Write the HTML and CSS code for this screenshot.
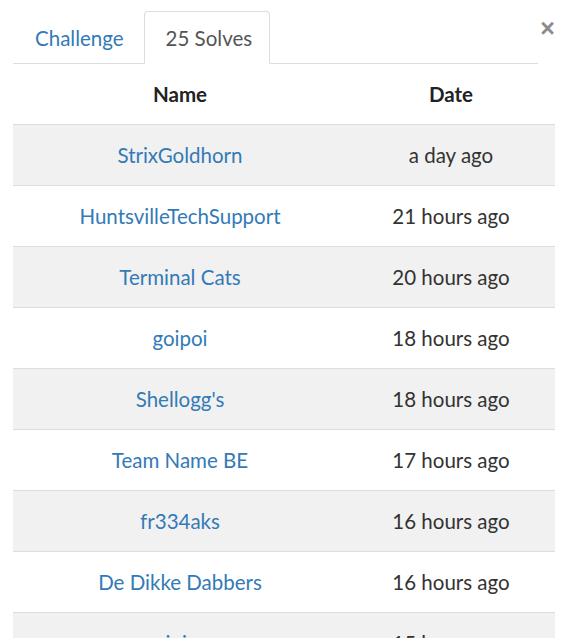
FILE: index.html
```html
<!DOCTYPE html>
<html>
<head>
<meta charset="utf-8">
<link rel="stylesheet" href="styles.css">
</head>
<body>
<div class="modal">
  <div class="head">
    <ul class="tabs">
      <li class="tab"><a href="#">Challenge</a></li>
      <li class="tab active"><a href="#">25 Solves</a></li>
    </ul>
    <button class="close">&times;</button>
  </div>
  <table class="solves">
    <thead>
      <tr><th class="c-name">Name</th><th class="c-date">Date</th></tr>
    </thead>
    <tbody>
      <tr><td><a href="#">StrixGoldhorn</a></td><td>a day ago</td></tr>
      <tr><td><a href="#">HuntsvilleTechSupport</a></td><td>21 hours ago</td></tr>
      <tr><td><a href="#">Terminal Cats</a></td><td>20 hours ago</td></tr>
      <tr><td><a href="#">goipoi</a></td><td>18 hours ago</td></tr>
      <tr><td><a href="#">Shellogg's</a></td><td>18 hours ago</td></tr>
      <tr><td><a href="#">Team Name BE</a></td><td>17 hours ago</td></tr>
      <tr><td><a href="#">fr334aks</a></td><td>16 hours ago</td></tr>
      <tr><td><a href="#">De Dikke Dabbers</a></td><td>16 hours ago</td></tr>
      <tr><td><a href="#">ninjas</a></td><td>15 hours ago</td></tr>
    </tbody>
  </table>
</div>
</body>
</html>
```
FILE: styles.css
```css
html, body {
  margin: 0;
  padding: 0;
  background: #fff;
  overflow: hidden;
}
body {
  font-family: Lato, "Open Sans", sans-serif;
  font-size: 20.5px;
  color: #333;
  line-height: 1.42857;
}
.modal {
  padding: 11px 9px 0 13px;
}
.head {
  display: flex;
  align-items: flex-start;
}
.tabs {
  list-style: none;
  margin: 0;
  padding: 0;
  display: flex;
  flex: 1;
  border-bottom: 1px solid #ddd;
}
.tab {
  margin-right: 0;
  margin-bottom: -1px;
}
.tab a {
  display: block;
  padding: 12px 19px 11px 21px;
  line-height: 28px;
  border: 1px solid transparent;
  border-radius: 4px 4px 0 0;
  color: #337ab7;
  text-decoration: none;
}
.tab.active a {
  color: #555;
  background: #fff;
  padding-right: 17px;
  border-color: #ddd #ddd transparent #ddd;
}
.close {
  margin: 5px 0 0 2px;
  padding: 0;
  width: 15px;
  background: none;
  border: 0;
  font-family: "Liberation Sans", sans-serif;
  font-size: 25px;
  font-weight: bold;
  line-height: 1;
  color: #8c8c8c;
  cursor: pointer;
}
.solves {
  width: 542px;
  border-collapse: collapse;
  table-layout: fixed;
}
.c-name { width: 318px; }
.solves th, .solves td {
  text-align: center;
  padding: 17px 8px;
  line-height: 26px;
}
.solves th {
  font-weight: bold;
  color: #222;
  border-bottom: 1px solid #ddd;
}
.solves td {
  border-top: 1px solid #ddd;
}
.solves thead + tbody tr:first-child td {
  border-top: 0;
}
.solves tbody tr:nth-child(odd) {
  background: #f1f1f1;
}
.solves a {
  color: #337ab7;
  text-decoration: none;
}
```
